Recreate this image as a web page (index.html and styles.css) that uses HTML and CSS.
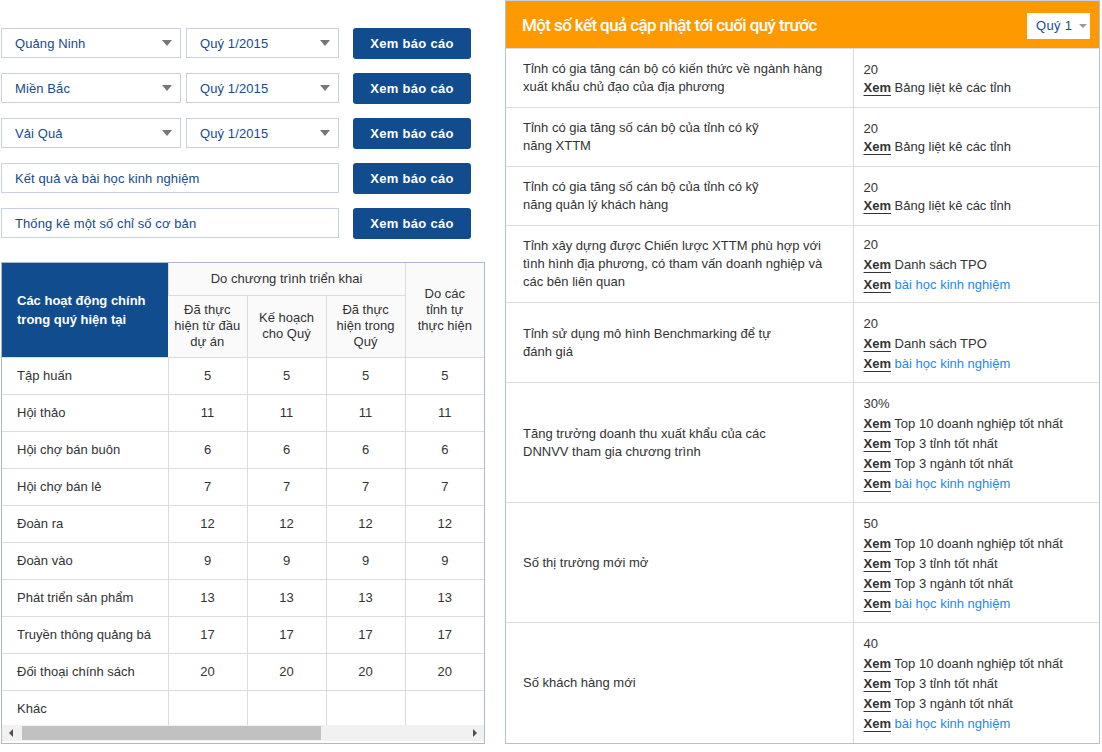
FILE: index.html
```html
<!DOCTYPE html>
<html lang="vi">
<head>
<meta charset="utf-8">
<title>Báo cáo</title>
<link rel="stylesheet" href="styles.css">
</head>
<body>
<div class="page">
  <div class="left">
    <div class="form-row">
      <div class="select s1"><span>Quảng Ninh</span><i class="caret"></i></div>
      <div class="select s2"><span>Quý 1/2015</span><i class="caret"></i></div>
      <button class="btn">Xem báo cáo</button>
    </div>
    <div class="form-row">
      <div class="select s1"><span>Miền Bắc</span><i class="caret"></i></div>
      <div class="select s2"><span>Quý 1/2015</span><i class="caret"></i></div>
      <button class="btn">Xem báo cáo</button>
    </div>
    <div class="form-row">
      <div class="select s1"><span>Vải Quả</span><i class="caret"></i></div>
      <div class="select s2"><span>Quý 1/2015</span><i class="caret"></i></div>
      <button class="btn">Xem báo cáo</button>
    </div>
    <div class="form-row">
      <div class="select wide"><span>Kết quả và bài học kinh nghiệm</span></div>
      <button class="btn">Xem báo cáo</button>
    </div>
    <div class="form-row">
      <div class="select wide"><span>Thống kê một số chỉ số cơ bản</span></div>
      <button class="btn">Xem báo cáo</button>
    </div>

    <div class="table-box">
      <div class="table-view">
        <table class="act">
          <colgroup><col class="c0"><col class="cn"><col class="cn"><col class="cn"><col class="cl"></colgroup>
          <thead>
            <tr class="h1">
              <th rowspan="2" class="main">Các hoạt động chính<br>trong quý hiện tại</th>
              <th colspan="3">Do chương trình triển khai</th>
              <th rowspan="2">Do các<br>tỉnh tự<br>thực hiện</th>
            </tr>
            <tr class="h2">
              <th>Đã thực<br>hiện từ đầu<br>dự án</th>
              <th>Kế hoạch<br>cho Quý</th>
              <th>Đã thực<br>hiện trong<br>Quý</th>
            </tr>
          </thead>
          <tbody>
            <tr><td class="name">Tập huấn</td><td>5</td><td>5</td><td>5</td><td>5</td></tr>
            <tr><td class="name">Hội thảo</td><td>11</td><td>11</td><td>11</td><td>11</td></tr>
            <tr><td class="name">Hội chợ bán buôn</td><td>6</td><td>6</td><td>6</td><td>6</td></tr>
            <tr><td class="name">Hội chợ bán lẻ</td><td>7</td><td>7</td><td>7</td><td>7</td></tr>
            <tr><td class="name">Đoàn ra</td><td>12</td><td>12</td><td>12</td><td>12</td></tr>
            <tr><td class="name">Đoàn vào</td><td>9</td><td>9</td><td>9</td><td>9</td></tr>
            <tr><td class="name">Phát triển sản phẩm</td><td>13</td><td>13</td><td>13</td><td>13</td></tr>
            <tr><td class="name">Truyền thông quảng bá</td><td>17</td><td>17</td><td>17</td><td>17</td></tr>
            <tr><td class="name">Đối thoại chính sách</td><td>20</td><td>20</td><td>20</td><td>20</td></tr>
            <tr><td class="name">Khác</td><td></td><td></td><td></td><td></td></tr>
          </tbody>
        </table>
      </div>
      <div class="hscroll">
        <span class="arrow arrow-l"></span>
        <div class="track"><div class="thumb"></div></div>
        <span class="arrow arrow-r"></span>
      </div>
    </div>
  </div>

  <div class="panel">
    <div class="panel-head">
      <h2>Một số kết quả cập nhật tới cuối quý trước</h2>
      <div class="qsel"><span>Quý 1</span><i class="caret small"></i></div>
    </div>
    <table class="results">
      <colgroup><col class="rc1"><col class="rc2"></colgroup>
      <tr class="r-short">
        <td class="lbl">Tỉnh có gia tăng cán bộ có kiến thức về ngành hàng<br>xuất khẩu chủ đạo của địa phương</td>
        <td class="val">20<br><b class="xem">Xem</b> Bảng liệt kê các tỉnh</td>
      </tr>
      <tr class="r-short">
        <td class="lbl">Tỉnh có gia tăng số cán bộ của tỉnh có kỹ<br>năng XTTM</td>
        <td class="val">20<br><b class="xem">Xem</b> Bảng liệt kê các tỉnh</td>
      </tr>
      <tr class="r-short">
        <td class="lbl">Tỉnh có gia tăng số cán bộ của tỉnh có kỹ<br>năng quản lý khách hàng</td>
        <td class="val">20<br><b class="xem">Xem</b> Bảng liệt kê các tỉnh</td>
      </tr>
      <tr class="r-mid r4">
        <td class="lbl">Tỉnh xây dựng được Chiến lược XTTM phù hợp với<br>tình hình địa phương, có tham vấn doanh nghiệp và<br>các bên liên quan</td>
        <td class="val"><div class="ln">20</div><div class="ln"><b class="xem">Xem</b> Danh sách TPO</div><div class="ln"><b class="xem">Xem</b> <a class="lnk">bài học kinh nghiệm</a></div></td>
      </tr>
      <tr class="r-mid r5">
        <td class="lbl">Tỉnh sử dụng mô hình Benchmarking để tự<br>đánh giá</td>
        <td class="val"><div class="ln">20</div><div class="ln"><b class="xem">Xem</b> Danh sách TPO</div><div class="ln"><b class="xem">Xem</b> <a class="lnk">bài học kinh nghiệm</a></div></td>
      </tr>
      <tr class="r-long">
        <td class="lbl">Tăng trưởng doanh thu xuất khẩu của các<br>DNNVV tham gia chương trình</td>
        <td class="val"><div class="ln">30%</div><div class="ln"><b class="xem">Xem</b> Top 10 doanh nghiệp tốt nhất</div><div class="ln"><b class="xem">Xem</b> Top 3 tỉnh tốt nhất</div><div class="ln"><b class="xem">Xem</b> Top 3 ngành tốt nhất</div><div class="ln"><b class="xem">Xem</b> <a class="lnk">bài học kinh nghiệm</a></div></td>
      </tr>
      <tr class="r-long">
        <td class="lbl">Số thị trường mới mở</td>
        <td class="val"><div class="ln">50</div><div class="ln"><b class="xem">Xem</b> Top 10 doanh nghiệp tốt nhất</div><div class="ln"><b class="xem">Xem</b> Top 3 tỉnh tốt nhất</div><div class="ln"><b class="xem">Xem</b> Top 3 ngành tốt nhất</div><div class="ln"><b class="xem">Xem</b> <a class="lnk">bài học kinh nghiệm</a></div></td>
      </tr>
      <tr class="r-long">
        <td class="lbl">Số khách hàng mới</td>
        <td class="val"><div class="ln">40</div><div class="ln"><b class="xem">Xem</b> Top 10 doanh nghiệp tốt nhất</div><div class="ln"><b class="xem">Xem</b> Top 3 tỉnh tốt nhất</div><div class="ln"><b class="xem">Xem</b> Top 3 ngành tốt nhất</div><div class="ln"><b class="xem">Xem</b> <a class="lnk">bài học kinh nghiệm</a></div></td>
      </tr>
    </table>
  </div>
</div>
</body>
</html>
```

FILE: styles.css
```css
* { box-sizing: border-box; }
html, body { margin: 0; padding: 0; background: #fff; }
body {
  font-family: "Liberation Sans", Arial, sans-serif;
  font-size: 13px;
  color: #333;
}
.page {
  display: flex;
  align-items: flex-start;
  padding-left: 1px;
}
.left {
  width: 484px;
  padding-top: 28px;
  display: flex;
  flex-direction: column;
  gap: 15px;
}
.form-row {
  display: flex;
  align-items: center;
  height: 30px;
}
.select {
  height: 30px;
  border: 1px solid #c8d2de;
  background: #fff;
  display: flex;
  align-items: center;
  justify-content: space-between;
  padding: 0 8px 0 13px;
  color: #174a8b;
  font-size: 13px;
  letter-spacing: 0.1px;
}
.s1 { width: 180px; margin-right: 5px; }
.s2 { width: 153px; margin-right: 14px; }
.wide { width: 338px; margin-right: 14px; }
.caret {
  width: 0; height: 0;
  border-left: 5px solid transparent;
  border-right: 5px solid transparent;
  border-top: 6px solid #777;
}
.btn {
  width: 118px;
  height: 31px;
  border: 0;
  border-radius: 3px;
  background: #104c8e;
  color: #fff;
  font-family: "Liberation Sans", Arial, sans-serif;
  font-weight: bold;
  font-size: 13px;
  letter-spacing: 0.3px;
  padding: 1px 0 0;
}

.table-box {
  margin-top: 9px;
  width: 484px;
  border: 1px solid #a9b9cf;
  padding-bottom: 2px;
}
.table-view {
  height: 462px;
  overflow: hidden;
}
.act {
  width: 482px;
  border-collapse: collapse;
  table-layout: fixed;
}
.act col.c0 { width: 166px; }
.act col.cn { width: 79px; }
.act col.cl { width: 79px; }
.act th {
  font-weight: normal;
  color: #333;
  background: #fafafa;
  border: 1px solid #dcdcdc;
  text-align: center;
  line-height: 16px;
  padding: 0 2px;
}
.act tr.h1 th { height: 32px; }
.act tr.h2 th { height: 62px; }
.act thead tr:first-child th { border-top: 0; }
.act th.main {
  background: #104c8e;
  color: #fff;
  font-weight: bold;
  text-align: left;
  padding-left: 15px;
  line-height: 19px;
  border: 0;
}
.act tr > *:last-child { border-right: 0; }
.act tr > *:first-child { border-left: 0; }
.act td {
  height: 37px;
  border: 1px solid #dcdcdc;
  text-align: center;
  padding: 0;
}
.act td.name {
  text-align: left;
  padding-left: 15px;
}

.hscroll {
  height: 16px;
  background: #f1f1f1;
  display: flex;
  align-items: center;
}
.arrow {
  width: 18px;
  height: 16px;
  display: flex;
  align-items: center;
  justify-content: center;
}
.arrow-l::before {
  content: "";
  border-top: 4px solid transparent;
  border-bottom: 4px solid transparent;
  border-right: 4px solid #505050;
}
.arrow-r::before {
  content: "";
  border-top: 4px solid transparent;
  border-bottom: 4px solid transparent;
  border-left: 4px solid #505050;
}
.track {
  flex: 1;
  height: 16px;
  padding: 1px 0;
}
.thumb {
  width: 299px;
  height: 14px;
  background: #c1c1c1;
  margin-left: 2px;
}

.panel {
  margin-left: 20px;
  width: 595px;
  border: 1px solid #b3c1d4;
  border-top-color: #c9d2de;
}
.panel-head {
  height: 47px;
  background: #ff9900;
  display: flex;
  align-items: center;
  justify-content: space-between;
  padding: 0 9px 0 16px;
}
.panel-head h2 {
  margin: 0;
  color: #fff;
  font-family: Roboto, "Liberation Sans", Arial, sans-serif;
  font-weight: 500;
  font-size: 17px;
  letter-spacing: -0.6px;
}
.qsel {
  width: 63px;
  height: 26px;
  background: #fff;
  display: flex;
  align-items: center;
  gap: 7px;
  padding: 0 0 0 9px;
  color: #174a8b;
  font-size: 13px;
  letter-spacing: 0.3px;
  margin-top: 2px;
}
.caret.small {
  border-left: 4px solid transparent;
  border-right: 4px solid transparent;
  border-top: 4px solid #999;
}

.results {
  width: 100%;
  border-collapse: collapse;
  table-layout: fixed;
}
.results col.rc1 { width: 347px; }
.results td {
  border-top: 1px solid #dcdcdc;
  vertical-align: middle;
}
.results td.lbl {
  padding: 0 10px 0 17px;
  line-height: 18px;
  border-right: 1px solid #dcdcdc;
}
.results td.val {
  padding: 0 8px 0 10px;
}
.results tr.r-short td { height: 59px; line-height: 18px; }
.results tr.r-short td.val { padding-top: 1px; }
.results tr.r4 td { height: 77px; }
.results tr.r5 td { height: 80px; }
.results tr.r-mid td.val { padding-top: 2px; padding-bottom: 0; }
.results tr.r-long td { height: 120px; }
.results tr.r-long td.val { padding-top: 2px; padding-bottom: 0; }
.ln { line-height: 20px; white-space: nowrap; }
.xem {
  font-weight: bold;
  color: #333;
  text-decoration: underline;
  text-underline-offset: 3px;
  text-decoration-thickness: 1px;
}
.lnk { color: #1e88f0; }
```
